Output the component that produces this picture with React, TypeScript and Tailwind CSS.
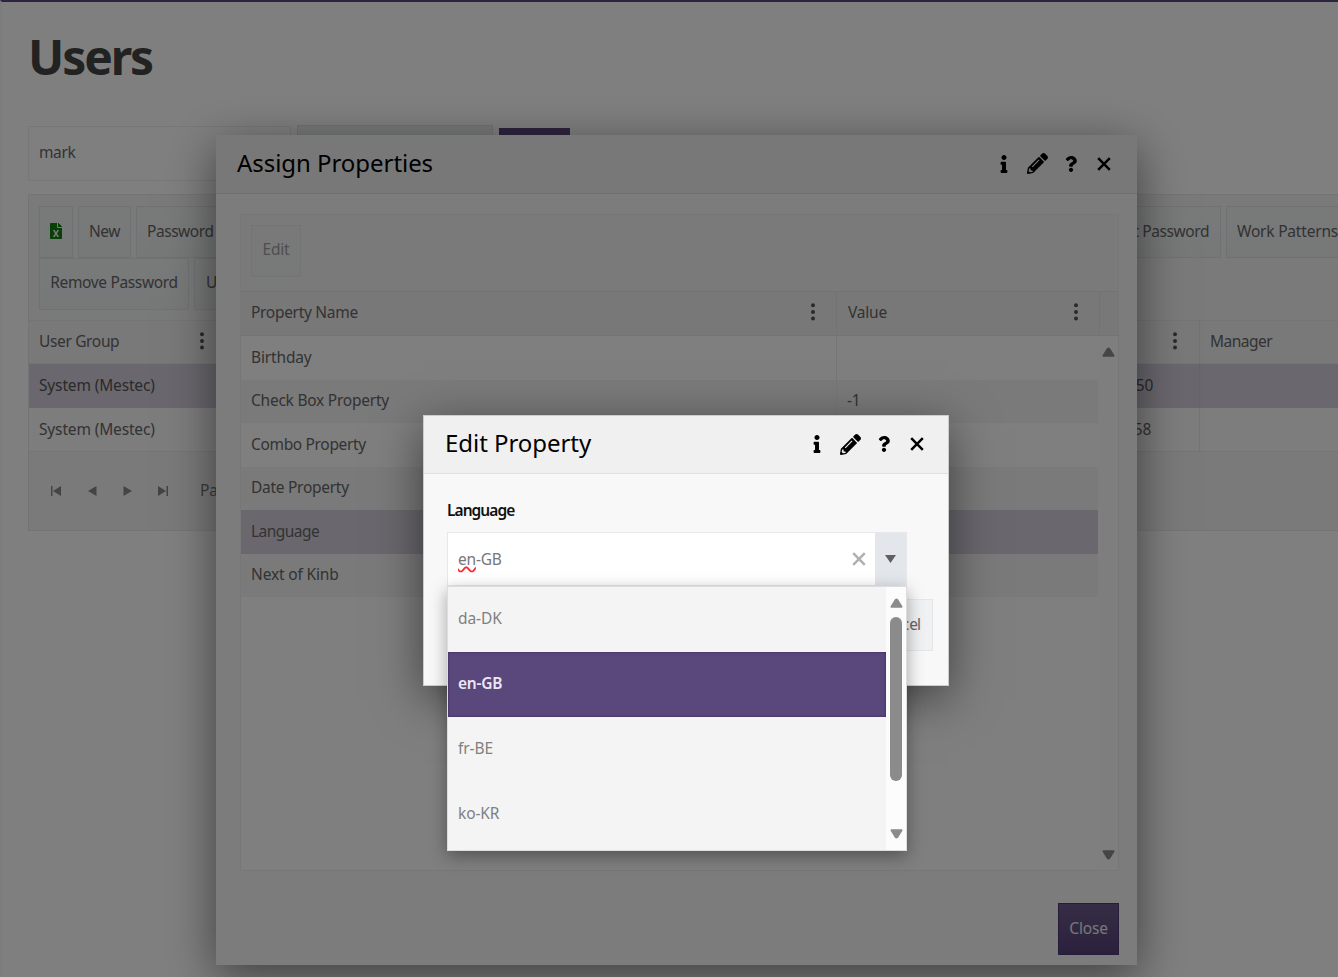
import type { ReactNode } from "react";
import { FaFileExcel, FaInfo, FaPencilAlt, FaQuestion } from "react-icons/fa";

const properties = [
    { name: "Birthday", value: "", tracking: "tracking-[-0.15px]" },
    { name: "Check Box Property", value: "-1", tracking: "tracking-[-0.24px]" },
    { name: "Combo Property", value: "", tracking: "tracking-[-0.34px]" },
    { name: "Date Property", value: "", tracking: "tracking-[-0.28px]" },
    { name: "Language", value: "", tracking: "tracking-[-0.55px]", selected: true },
    { name: "Next of Kinb", value: "", tracking: "tracking-[-0.15px]" },
];

const languages = ["da-DK", "en-GB", "fr-BE", "ko-KR"];

function Dots() {
    return (
        <svg className="h-[18px] w-1 shrink-0 fill-[#555]" viewBox="0 0 4 18">
            <circle cx="2" cy="2.3" r="2" />
            <circle cx="2" cy="9" r="2" />
            <circle cx="2" cy="15.6" r="2" />
        </svg>
    );
}

function Cross({ className }: { className: string }) {
    return (
        <svg className={className} viewBox="0 0 14 14" fill="none" stroke="currentColor">
            <path d="M1.2 1.2 12.8 12.8M12.8 1.2 1.2 12.8" />
        </svg>
    );
}

function Arrow({ down }: { down?: boolean }) {
    return (
        <svg className="h-[10px] w-[13px] shrink-0 fill-[#8b8b8b] stroke-[#8b8b8b]" viewBox="0 0 13 10">
            <path
                d={down ? "M1.4 1.2H11.6L7.3 8.2Q6.5 9 5.7 8.2Z" : "M1.4 8.8H11.6L7.3 1.8Q6.5 1 5.7 1.8Z"}
                strokeWidth="1.8"
                strokeLinejoin="round"
            />
        </svg>
    );
}

function ToolButton({ children, className = "" }: { children: ReactNode; className?: string }) {
    return (
        <div
            className={`flex h-[52px] shrink-0 items-center whitespace-nowrap border border-[#e0e3e5] bg-gradient-to-b from-[#f2f3f4] to-[#edf1f1] pb-[3px] text-[#666] ${className}`}
        >
            {children}
        </div>
    );
}

function WindowHeader({ title, className }: { title: string; className: string }) {
    return (
        <div className={`flex shrink-0 items-center justify-between border-b bg-[#f0f0f0] text-black ${className}`}>
            <h2 className="pb-[3px] text-[24px] leading-none tracking-[-0.05px]">{title}</h2>
            <div className="flex items-center pb-px">
                <FaInfo className="h-[18px] w-[8px]" />
                <FaPencilAlt className="ml-[19px] size-[21px]" />
                <FaQuestion className="ml-[17px] h-[16px] w-[12px]" />
                <Cross className="ml-5 size-[14px] stroke-[2.5]" />
            </div>
        </div>
    );
}

function UsersPage() {
    return (
        <div className="h-full w-full border-l-2 border-t-2 border-l-[#f8f8f8] border-t-[#5b477b] bg-white">
            <h1 className="ml-[26px] mt-[29px] h-[52px] text-[48px] font-bold leading-[52px] tracking-[-2.1px] text-[#444]">
                Users
            </h1>
            <div className="ml-[26px] mt-[42px] flex h-[56px]">
                <div className="mt-px flex h-[55px] w-[263px] items-center border border-[#eee] px-[10px] pb-[3px] tracking-[-0.4px] text-[#666]">
                    mark
                </div>
                <div className="ml-[6px] h-[54px] w-[196px] border border-[#e0e4e6] bg-[#f0f1f1]" />
                <div className="ml-[6px] mt-[3px] h-[51px] w-[71px] bg-[#5b477b]" />
            </div>
            <div className="ml-[26px] mt-[13px] h-[337px] w-[1400px] border border-[#e9e9e9] bg-[#f4f4f4]">
                <div className="px-[10px] pt-[11px]">
                    <div className="flex h-[51.500px] gap-[5px]">
                        <ToolButton className="w-[34px] justify-center">
                            <FaFileExcel className="h-[16px] w-[12px] text-[#108010]" />
                        </ToolButton>
                        <ToolButton className="w-[53px] justify-center tracking-[-0.4px]">New</ToolButton>
                        <ToolButton className="w-[100px] pl-[10px] tracking-[-0.45px]">Password</ToolButton>
                        <ToolButton className="ml-auto w-[140px] justify-end pr-[11px] tracking-[-0.42px]">Reset Password</ToolButton>
                        <ToolButton className="mr-[60px] w-[131px] pl-[10px] tracking-[-0.2px]">Work Patterns</ToolButton>
                    </div>
                    <div className="flex gap-[5px]">
                        <ToolButton className="w-[150px] justify-center tracking-[-0.35px]">Remove Password</ToolButton>
                        <ToolButton className="w-[110px] pl-[11px]">Unlock</ToolButton>
                    </div>
                </div>
                <div className="mt-[10px] flex h-[44px] items-center border-y border-[#e8e8e8] bg-[#f2f2f2] text-[#666]">
                    <div className="flex h-full w-[250px] items-center pb-px pl-[10px]">
                        <span className="w-[161px] tracking-[-0.35px]">User Group</span>
                        <Dots />
                    </div>
                    <div className="flex h-full flex-1 items-center justify-end pb-px pr-[22px]">
                        <Dots />
                    </div>
                    <div className="flex h-full w-[228px] items-center border-l border-[#e3e3e3] pb-px pl-[10px] tracking-[-0.5px]">
                        Manager
                    </div>
                </div>
                <div className="flex h-[44px] items-center bg-[#d4d0dc] tracking-[-0.15px] text-[#555]">
                    <span className="flex-1 pb-[2px] pl-[10px]">System (Mestec)</span>
                    <span className="pb-[2px] pr-[46px] tracking-[-0.3px]">50</span>
                    <span className="h-full w-[228px] border-l border-[#cbc7d3]" />
                </div>
                <div className="flex h-[44px] items-center border-b border-[#eaeaea] bg-[#fafafa] tracking-[-0.15px] text-[#666]">
                    <span className="flex-1 pb-px pl-[10px]">System (Mestec)</span>
                    <span className="pb-px pr-[48px] tracking-[-0.3px]">58</span>
                    <span className="h-full w-[228px] border-l border-[#eaeaea]" />
                </div>
                <div className="flex h-[78px] items-center pl-[21px] text-[#777]">
                    <svg className="h-[12px] w-[120px] fill-[#888] stroke-none" viewBox="0 0 120 12">
                        <path d="M1 1H2.500V11H1ZM11 1V11L3 6ZM46.500 1V11L38 6ZM73.500 1V11L82 6ZM108 1V11L116 6ZM116.500 1H118V11H116.500Z" />
                    </svg>
                    <span className="ml-[30px] pb-px">Page</span>
                </div>
            </div>
        </div>
    );
}

function AssignProperties() {
    return (
        <div className="absolute left-[216px] top-[135px] flex h-[830px] w-[921px] flex-col bg-[#f8f8f8] shadow-[0_12px_45px_rgba(0,0,0,0.5)]">
            <WindowHeader title="Assign Properties" className="h-[59px] border-[#dcdcdc] pl-[21px] pr-[26px]" />
            <div className="ml-6 mt-5 flex h-[657px] w-[879px] flex-col border border-[#efefef] bg-white">
                <div className="h-[76px] bg-[#f4f4f4] px-[10px] pt-[10px]">
                    <ToolButton className="w-[50px] justify-center border-[#d8dee0] pb-[4px] opacity-60">Edit</ToolButton>
                </div>
                <div className="flex h-[45px] items-center border-y border-[#e6e6e6] bg-[#f0f0f0] text-[#666]">
                    <div className="flex h-full w-[595px] items-center justify-between pb-[3px] pl-[10px] pr-[21px] tracking-[-0.3px]">
                        Property Name
                        <Dots />
                    </div>
                    <div className="flex h-full w-[264px] items-center justify-between border-x border-[#e6e6e6] pb-[3px] pl-[11px] pr-[21px]">
                        Value
                        <Dots />
                    </div>
                </div>
                <div className="flex flex-1">
                    <div className="w-[857px]">
                        {properties.map((p, i) => (
                            <div
                                key={p.name}
                                className={`flex h-[43.500px] items-center text-[#666] ${p.selected ? "bg-[#d4d0dc]" : i % 2 ? "bg-[#f4f4f4]" : "bg-white"}`}
                            >
                                <span className={`w-[595px] pb-[2px] pl-[10px] ${p.tracking}`}>{p.name}</span>
                                <span className="flex h-full flex-1 items-center border-l border-[#ececec] pb-[2px] pl-[10px]">{p.value}</span>
                            </div>
                        ))}
                    </div>
                    <div className="flex flex-1 flex-col items-center justify-between bg-[#fcfcfc] pb-[10px] pt-[11px]">
                        <Arrow />
                        <Arrow down />
                    </div>
                </div>
            </div>
            <div className="ml-auto mr-[18px] mt-[32px] flex h-[52px] w-[61px] items-center justify-center border border-[#4d3a70] bg-gradient-to-b from-[#6d5a8c] to-[#574279] pb-[2px] text-[#eee]">
                Close
            </div>
        </div>
    );
}

function EditProperty() {
    return (
        <div className="absolute left-[423px] top-[415px] h-[271px] w-[526px] border border-[#ccc] bg-[#f8f8f8] shadow-[0_12px_45px_rgba(0,0,0,0.5)]">
            <WindowHeader title="Edit Property" className="h-[58px] border-[#e0e0e0] pl-[21px] pr-[24px]" />
            <label className="ml-[23px] mt-[25px] block h-[22px] font-semibold leading-[22px] tracking-[-0.95px] text-[#111]">Language</label>
            <div className="ml-[23px] mt-[11px] flex h-[54px] w-[460px] border border-[#e8e8e8] bg-white">
                <span className="flex flex-1 items-center pb-px pl-[10px] text-[#777]">
                    <span className="underline decoration-red-500 decoration-wavy decoration-[1.5px] underline-offset-1">en</span>-GB
                </span>
                <Cross className="mr-[9px] size-[14px] self-center stroke-[2.5] text-[#b0b0b0]" />
                <div className="flex w-[31px] items-center justify-center bg-[#e3e7ec]">
                    <svg className="h-2 w-[11px] fill-[#606060]" viewBox="0 0 11 8">
                        <path d="M0 0H11L5.500 8Z" />
                    </svg>
                </div>
            </div>
            <div className="ml-auto mr-[15px] mt-[13px] flex h-[52px] w-[76px] items-center justify-end border border-[#e4e6e8] bg-[#eff1f3] pb-[2px] pr-[12px] tracking-[-1px] text-[#666]">
                Canc<span className="ml-px">el</span>
            </div>
            <div className="absolute left-[23px] top-[170px] flex h-[265px] w-[460px] overflow-hidden border border-[#ddd] bg-[#f4f4f4] shadow-[0_5px_16px_rgba(0,0,0,0.35)]">
                <div className="flex-1">
                    {languages.map((code) => (
                        <div
                            key={code}
                            className={`flex h-[64.800px] items-center pb-[2px] pl-[10px] ${code === "en-GB" ? "bg-[#5a477b] font-semibold text-[#ece8f2] shadow-[inset_0_0_3px_#3b2860]" : "tracking-[-0.1px] text-[#808080]"}`}
                        >
                            {code}
                        </div>
                    ))}
                </div>
                <div className="flex w-5 flex-col items-center bg-[#fcfcfc] pt-[11px]">
                    <Arrow />
                    <div className="mb-[48px] mt-[9px] h-[164px] w-[12px] shrink-0 rounded-full bg-[#8b8b8b]" />
                    <Arrow down />
                </div>
            </div>
        </div>
    );
}

export default function App() {
    return (
        <div className="relative h-[977px] w-[1338px] overflow-hidden bg-white font-['Noto_Sans',sans-serif] text-[15.500px] leading-[22px] tracking-[-0.2px]">
            <UsersPage />
            <AssignProperties />
            <div className="absolute inset-0 bg-black/50" />
            <EditProperty />
        </div>
    );
}
